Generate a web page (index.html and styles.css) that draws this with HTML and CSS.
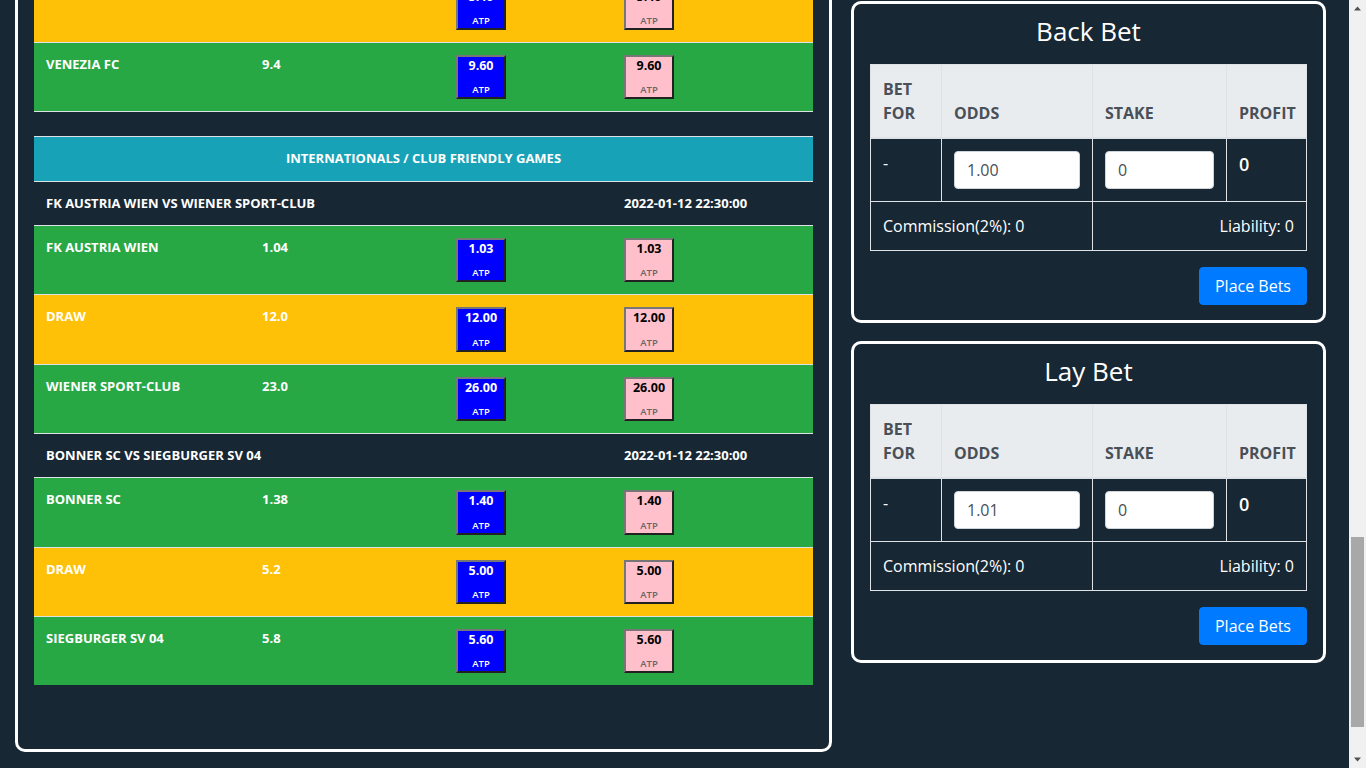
FILE: index.html
```html
<!DOCTYPE html>
<html lang="en">
<head>
<meta charset="utf-8">
<title>Exchange</title>
<link rel="stylesheet" href="styles.css">
</head>
<body>
<div class="page">
  <div class="markets-view">
    <section class="markets">
      <table class="odds-table">
        <colgroup><col class="c-name"><col class="c-rate"><col class="c-back"><col class="c-lay"></colgroup>
        <tbody>
          <tr class="runner yellow"><td>DRAW</td><td>5.4</td><td><button class="odd back"><span class="price">5.40</span><span class="atp">ATP</span></button></td><td><button class="odd lay"><span class="price">5.40</span><span class="atp">ATP</span></button></td></tr>
          <tr class="runner green"><td>VENEZIA FC</td><td>9.4</td><td><button class="odd back"><span class="price">9.60</span><span class="atp">ATP</span></button></td><td><button class="odd lay"><span class="price">9.60</span><span class="atp">ATP</span></button></td></tr>
        </tbody>
      </table>

      <table class="odds-table">
        <colgroup><col class="c-name"><col class="c-rate"><col class="c-back"><col class="c-lay"></colgroup>
        <tbody>
          <tr class="league"><td colspan="4">INTERNATIONALS / CLUB FRIENDLY GAMES</td></tr>
          <tr class="match"><td colspan="3">FK AUSTRIA WIEN VS WIENER SPORT-CLUB</td><td>2022-01-12 22:30:00</td></tr>
          <tr class="runner green"><td>FK AUSTRIA WIEN</td><td>1.04</td><td><button class="odd back"><span class="price">1.03</span><span class="atp">ATP</span></button></td><td><button class="odd lay"><span class="price">1.03</span><span class="atp">ATP</span></button></td></tr>
          <tr class="runner yellow"><td>DRAW</td><td>12.0</td><td><button class="odd back"><span class="price">12.00</span><span class="atp">ATP</span></button></td><td><button class="odd lay"><span class="price">12.00</span><span class="atp">ATP</span></button></td></tr>
          <tr class="runner green"><td>WIENER SPORT-CLUB</td><td>23.0</td><td><button class="odd back"><span class="price">26.00</span><span class="atp">ATP</span></button></td><td><button class="odd lay"><span class="price">26.00</span><span class="atp">ATP</span></button></td></tr>
          <tr class="match"><td colspan="3">BONNER SC VS SIEGBURGER SV 04</td><td>2022-01-12 22:30:00</td></tr>
          <tr class="runner green"><td>BONNER SC</td><td>1.38</td><td><button class="odd back"><span class="price">1.40</span><span class="atp">ATP</span></button></td><td><button class="odd lay"><span class="price">1.40</span><span class="atp">ATP</span></button></td></tr>
          <tr class="runner yellow"><td>DRAW</td><td>5.2</td><td><button class="odd back"><span class="price">5.00</span><span class="atp">ATP</span></button></td><td><button class="odd lay"><span class="price">5.00</span><span class="atp">ATP</span></button></td></tr>
          <tr class="runner green"><td>SIEGBURGER SV 04</td><td>5.8</td><td><button class="odd back"><span class="price">5.60</span><span class="atp">ATP</span></button></td><td><button class="odd lay"><span class="price">5.60</span><span class="atp">ATP</span></button></td></tr>
        </tbody>
      </table>
    </section>
  </div>

  <aside class="betslip">
    <div class="bet-panel">
      <h3 class="bet-title">Back Bet</h3>
      <table class="bet-table">
        <colgroup><col class="b-for"><col class="b-odds"><col class="b-stake"><col class="b-profit"></colgroup>
        <thead><tr><th>Bet For</th><th>Odds</th><th>Stake</th><th>Profit</th></tr></thead>
        <tbody>
          <tr><td>-</td><td><input class="field" type="text" value="1.00"></td><td><input class="field" type="text" value="0"></td><td class="profit">0</td></tr>
          <tr><td colspan="2">Commission(2%): 0</td><td colspan="2" class="liability">Liability: 0</td></tr>
        </tbody>
      </table>
      <div class="actions"><button class="btn-place">Place Bets</button></div>
    </div>
    <div class="bet-panel">
      <h3 class="bet-title">Lay Bet</h3>
      <table class="bet-table">
        <colgroup><col class="b-for"><col class="b-odds"><col class="b-stake"><col class="b-profit"></colgroup>
        <thead><tr><th>Bet For</th><th>Odds</th><th>Stake</th><th>Profit</th></tr></thead>
        <tbody>
          <tr><td>-</td><td><input class="field" type="text" value="1.01"></td><td><input class="field" type="text" value="0"></td><td class="profit">0</td></tr>
          <tr><td colspan="2">Commission(2%): 0</td><td colspan="2" class="liability">Liability: 0</td></tr>
        </tbody>
      </table>
      <div class="actions"><button class="btn-place">Place Bets</button></div>
    </div>
  </aside>
</div>

<div class="scrollbar" aria-hidden="true">
  <div class="sb-arrow"><svg width="17" height="17" viewBox="0 0 17 17"><path d="M5 10.5h7L8.5 6.5z" fill="#505050"/></svg></div>
  <div class="sb-before"></div>
  <div class="sb-thumb"></div>
  <div class="sb-after"></div>
  <div class="sb-arrow"><svg width="17" height="17" viewBox="0 0 17 17"><path d="M5 6.5h7L8.5 10.5z" fill="#505050"/></svg></div>
</div>
</body>
</html>
```

FILE: styles.css
```css
body {
  margin: 0;
  height: 100vh;
  overflow: hidden;
  display: flex;
  background: #172734;
  color: #fff;
  font-family: "Open Sans", "Liberation Sans", sans-serif;
}

.page {
  flex: 1;
  display: flex;
  gap: 19px;
  padding-left: 15px;
  height: 100vh;
}

/* ---------- markets (scrolled to the lower part) ---------- */
.markets-view {
  width: 817px;
  height: 100vh;
  box-sizing: border-box;
  padding-bottom: 16px;
  display: flex;
  flex-direction: column;
  justify-content: flex-end;
  overflow: hidden;
}

.markets {
  flex: none;
  border: 3px solid #fff;
  border-radius: 10px;
  padding: 16px 16px 64px;
}

.odds-table {
  width: 779px;
  table-layout: fixed;
  border-collapse: separate;
  border-spacing: 0;
  font-size: 13px;
  font-weight: 700;
  line-height: 19.5px;
  color: #fff;
}

.odds-table:not(:last-child) {
  border-bottom: 1px solid #dee2e6;
  margin-bottom: 24px;
}

.c-name { width: 216px; }
.c-rate { width: 194px; }
.c-back { width: 168px; }

.odds-table td {
  padding: 12px;
  border-top: 1px solid #dee2e6;
  vertical-align: top;
  white-space: nowrap;
}

.league td {
  background: #17a2b8;
  text-align: center;
}

.runner.green td { background: #28a745; }
.runner.yellow td { background: #ffc107; }

.odd {
  display: flex;
  flex-direction: column;
  justify-content: space-between;
  align-items: center;
  width: 50px;
  height: 44.25px;
  box-sizing: border-box;
  padding: 0;
  margin: 0;
  border: 2px outset #767676;
  font-family: "Open Sans", "Liberation Sans", sans-serif;
  cursor: pointer;
}

.odd .price {
  font-size: 12.5px;
  font-weight: 700;
  line-height: 18px;
}

.odd .atp {
  font-size: 9.5px;
  font-weight: 600;
  line-height: 15px;
}

.odd.back {
  background: #0000ff;
  color: #fff;
}

.odd.lay {
  background: #ffc0cb;
  color: #000;
}

.odd.lay .atp { color: #666; }

/* ---------- bet slip ---------- */
.betslip {
  width: 475px;
  padding-top: 1px;
}

.bet-panel {
  border: 3px solid #fff;
  border-radius: 10px;
  padding: 12px 16px 15px;
  margin-bottom: 18px;
}

.bet-title {
  margin: 0 0 17px;
  font-size: 26px;
  font-weight: 400;
  line-height: 1.2;
  text-align: center;
  color: #fff;
}

.bet-table {
  width: 100%;
  table-layout: fixed;
  border-collapse: collapse;
  margin-bottom: 16px;
  font-size: 16px;
  line-height: 1.5;
  color: #fff;
}

.b-for { width: 71px; }
.b-odds { width: 151px; }
.b-stake { width: 134px; }

.bet-table th {
  background: #e9ecef;
  color: #495057;
  font-weight: 700;
  text-transform: uppercase;
  text-align: left;
  vertical-align: bottom;
  padding: 12px;
  border: 1px solid #dee2e6;
  border-bottom-width: 2px;
}

.bet-table td {
  padding: 12px;
  border: 1px solid #dee2e6;
  vertical-align: top;
}

.field {
  display: block;
  width: 100%;
  height: 38px;
  box-sizing: border-box;
  padding: 6px 12px;
  border: 1px solid #ced4da;
  border-radius: 4px;
  background: #fff;
  color: #495057;
  font-family: "Open Sans", "Liberation Sans", sans-serif;
  font-size: 16px;
  line-height: 1.5;
}

.bet-table td.profit {
  font-size: 18px;
  font-weight: 600;
}

.liability { text-align: right; }

.actions {
  display: flex;
  justify-content: flex-end;
}

.btn-place {
  background: #007bff;
  color: #fff;
  border: 1px solid #007bff;
  border-radius: 4px;
  padding: 6px 15px;
  font-family: "Open Sans", "Liberation Sans", sans-serif;
  font-size: 16px;
  line-height: 1.5;
  cursor: pointer;
}

/* ---------- window scrollbar ---------- */
.scrollbar {
  width: 17px;
  flex: none;
  display: flex;
  flex-direction: column;
  background: #f1f1f1;
}

.sb-arrow {
  height: 17px;
  flex: none;
}

.sb-arrow svg { display: block; }

.sb-before {
  height: 520px;
  flex: none;
}

.sb-thumb {
  height: 190px;
  flex: none;
  margin: 0 2px;
  background: #a8a8a8;
}

.sb-after { flex: 1; }
```
